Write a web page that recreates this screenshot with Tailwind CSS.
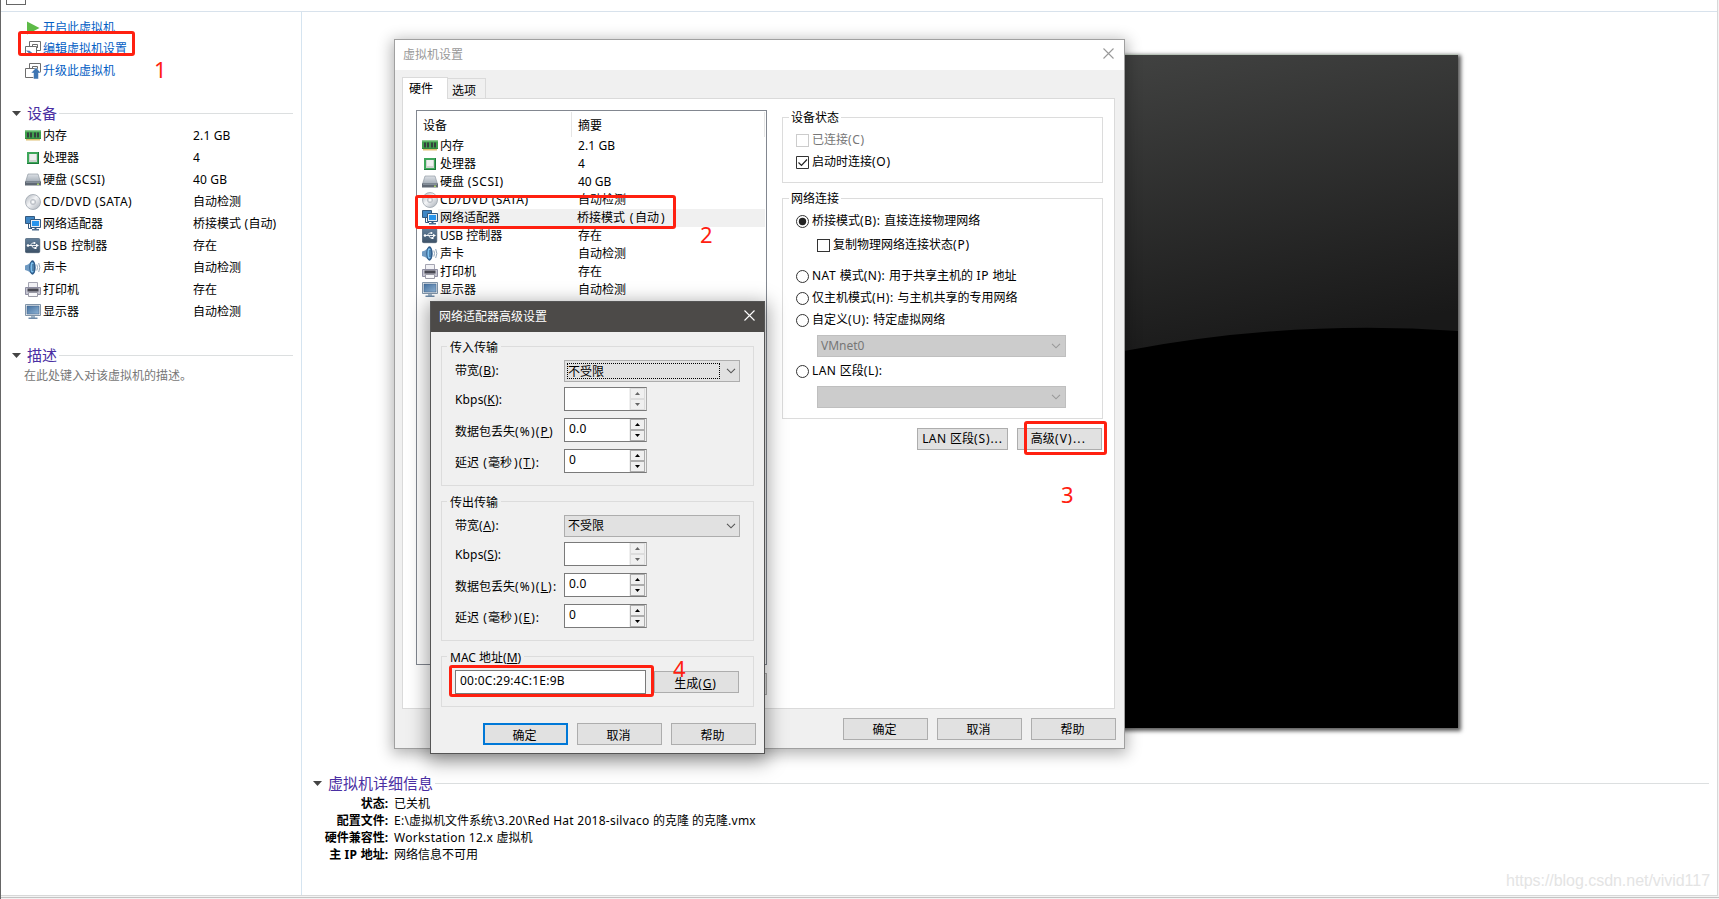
<!DOCTYPE html>
<html lang="zh-CN">
<head>
<meta charset="utf-8">
<title>虚拟机设置</title>
<script src="https://cdn.jsdelivr.net/npm/@tailwindcss/browser@4"></script>
</head>
<body class="relative h-[899px] w-[1719px] overflow-hidden bg-white font-['Noto_Sans','Noto_Sans_CJK_SC',sans-serif] text-[12px] leading-[18px] text-black">

<svg width="0" height="0" class="absolute">
  <defs>
    <linearGradient id="gdisk" x1="0" y1="0" x2="0" y2="1"><stop offset="0" stop-color="#dde1e6"/><stop offset="1" stop-color="#a3acb6"/></linearGradient>
    <linearGradient id="gscr" x1="0" y1="0" x2="1" y2="1"><stop offset="0" stop-color="#44709f"/><stop offset="1" stop-color="#8fb3d4"/></linearGradient>
    <linearGradient id="gcd" x1="0" y1="0" x2="1" y2="1"><stop offset="0" stop-color="#a9b0b8"/><stop offset=".45" stop-color="#f4f5f7"/><stop offset="1" stop-color="#a4abb4"/></linearGradient>
    <linearGradient id="gusb" x1="0" y1="0" x2="0" y2="1"><stop offset="0" stop-color="#64819c"/><stop offset="1" stop-color="#3c5167"/></linearGradient>
    <linearGradient id="gglass" x1="0" y1="0" x2=".28" y2="1"><stop offset="0" stop-color="#444544"/><stop offset="1" stop-color="#191919"/></linearGradient>
    <symbol id="mem" viewBox="0 0 16 16"><path d="M0 2.500h16V11H0z" fill="#3fa04c"/><path d="M0 2.500h16v1H0z" fill="#7cc981"/><path d="M2 4.500h2v5H2zM5 4.500h2v5H5zM9 4.500h2v5H9zM12 4.500h2v5h-2z" fill="#33413d"/><path d="M0 10h16v1H0z" fill="#2f8a3d"/><path d="M1 11h14v1.500H1z" fill="#dcbf72"/></symbol>
    <symbol id="cpu" viewBox="0 0 16 16"><path d="M2 2h12v12H2z" fill="#1c7a3a"/><path d="M2 2h11v11H2z" fill="#3ea75a"/><path d="M4 4h8v8H4z" fill="#cfd3d0"/><path d="M5 4h6v6H5z" fill="#eef0ef"/></symbol>
    <symbol id="disk" viewBox="0 0 16 16"><path d="M3 2h10l2.500 8H.5z" fill="url(#gdisk)" stroke="#858e99" stroke-width=".6"/><path d="M0 9.500h16v4H0z" fill="#5f6873"/><path d="M1 10h14v1H1z" fill="#848e99"/><path d="M12 11.500h2v1.500h-2z" fill="#a9d06a"/></symbol>
    <symbol id="cd" viewBox="0 0 16 16"><circle cx="8" cy="8" r="7.500" fill="url(#gcd)" stroke="#9da4ad" stroke-width=".8"/><circle cx="8" cy="8" r="2.600" fill="#d7dade" stroke="#b3b8bf" stroke-width=".8"/><circle cx="8" cy="8" r="1.100" fill="#fff"/></symbol>
    <symbol id="net" viewBox="0 0 16 16"><path d="M.5.500h9v7h-9z" fill="#3f86c4" stroke="#34597f"/><path d="M3.500 8v4.500H7" fill="none" stroke="#34597f"/><path d="M5.500 3.500h10v8h-10z" fill="#e8edf2" stroke="#34597f"/><path d="M7 5h7v5H7z" fill="#2794ec"/><path d="M9.500 12h2v1.500h-2z" fill="#34597f"/><path d="M7 13h7v1.500H7z" fill="#4b6a8d"/></symbol>
    <symbol id="usb" viewBox="0 0 16 16"><rect x=".3" y=".3" width="14.500" height="14.400" rx="1.500" fill="url(#gusb)" stroke="#3c5167" stroke-width=".6"/><path d="M3 7.500h9M5 7.500l2.500-2.500H9M6.500 7.500l2 2.500H10" fill="none" stroke="#fff" stroke-width=".9"/><circle cx="3" cy="7.500" r="1.300" fill="#fff"/><path d="m11 5.700 3 1.800-3 1.800z" fill="#fff"/><circle cx="9.500" cy="5" r="1" fill="#fff"/><path d="M9.500 9h2v2h-2z" fill="#fff"/></symbol>
    <symbol id="snd" viewBox="0 0 16 16"><path d="M0 5.500 3 4.500 7.500.500v14L3 11 0 10z" fill="#6f9ac2"/><ellipse cx="7.500" cy="7.500" rx="3.200" ry="7.200" fill="#2f5d8c"/><ellipse cx="7.200" cy="7.500" rx="1.800" ry="5.200" fill="#7cc0ee"/><path d="M8 4v7" stroke="#24496f"/><path d="M11.800 4.500q1.500 3 0 6M13.700 3q2.300 4.500 0 9" fill="none" stroke="#8fa4b8"/></symbol>
    <symbol id="prn" viewBox="0 0 16 16"><path d="M3.500.500h9v6h-9z" fill="#f1f1f5" stroke="#a5a5b2"/><path d="M.5 5.500h15v7H.5z" fill="#c4c4d0" stroke="#8e8ea2"/><path d="M2.500 6.500h11v3h-11z" fill="#484852"/><path d="M3.500 10.500h9v4h-9z" fill="#f7f7fa" stroke="#9a9aa6"/></symbol>
    <symbol id="dsp" viewBox="0 0 16 16"><path d="M.5.500h15v11H.5z" fill="#dfe6ec" stroke="#8194a8"/><path d="M2 2h12v8H2z" fill="url(#gscr)" stroke="#416288" stroke-width=".5"/><path d="M6 12h4v2H6z" fill="#9fb3c6"/><path d="M3.500 13.500h9V15h-9z" fill="#6d8aa8"/></symbol>
    <symbol id="vm" viewBox="0 0 16 16"><path d="M4.500 5V.500h11v9H12M.5 5.500h11v9H.5z" fill="none" stroke="#6d6d6d"/><path d="M7.500 5V3.500h5V7" fill="none" stroke="#6d6d6d"/></symbol>
    <symbol id="chev" viewBox="0 0 10 6"><path d="m1 .8 4 4 4-4" fill="none" stroke="currentColor" stroke-width="1.100"/></symbol>
    <symbol id="x" viewBox="0 0 11 11"><path d="m.5.500 10 10M10.500.500l-10 10" stroke="currentColor" stroke-width="1.100"/></symbol>
    <symbol id="up" viewBox="0 0 5 3"><path d="M0 3 2.500 0 5 3z" fill="currentColor"/></symbol>
    <symbol id="dn" viewBox="0 0 5 3"><path d="M0 0 2.500 3 5 0z" fill="currentColor"/></symbol>
    <symbol id="tri" viewBox="0 0 9 5"><path d="M0 0h9L4.500 5z" fill="#444"/></symbol>
  </defs>
</svg>

<div class="flex h-[899px] w-full flex-col border-l border-[#666] bg-[#f3f3f3]">
  <div class="flex h-[896px] w-[1717px] shrink-0 flex-col border-r border-b border-[#d8d8d8] bg-white">
  <header class="flex h-3 shrink-0 items-start border-b border-[#d8e2ec] pl-[5px]"><div class="h-[5px] w-5 border border-t-0 border-[#666]"></div></header>
  <div class="flex flex-1">

    <aside class="w-[301px] shrink-0 border-r border-[#d5e4f0] pt-[5px]">
      <nav class="flex flex-col pl-6 text-[#0560c4]">
        <a class="flex h-[21px] items-center gap-0.5"><svg class="size-4"><path d="M2 1.500 14.500 8 2 14.500z" fill="#5dba47"/></svg><span>开启此虚拟机</span></a>
        <a class="flex h-[22px] items-center gap-0.5"><svg class="size-4" viewBox="0 0 16 16"><use href="#vm"/><path d="m1 9.500 3.500.2L8 12.500h7v2.500H7z" fill="#4a78ae"/></svg><span>编辑虚拟机设置</span></a>
        <a class="flex h-[21px] items-center gap-0.5"><svg class="size-4" viewBox="0 0 16 16"><use href="#vm"/><path d="M11 4.500 16 10h-2.500v6h-5v-6H6z" fill="#3f76b3" stroke="#fff" stroke-width=".5"/></svg><span>升级此虚拟机</span></a>
      </nav>

      <h2 class="mt-5 flex h-6 items-center pl-[11px] pr-2 text-[15px] text-[#4a2fa3]"><svg class="mr-1.5 h-[5px] w-[9px]"><use href="#tri"/></svg>设备<i class="ml-0.5 h-px flex-1 bg-[#dcdfe0]"></i></h2>
      <ul class="flex flex-col pl-6">
        <li class="flex h-[22px] items-center gap-0.5"><svg class="size-4"><use href="#mem"/></svg><span class="w-[148px]">内存</span><span class="tracking-[.15px]">2.1 GB</span></li>
        <li class="flex h-[22px] items-center gap-0.5"><svg class="size-4"><use href="#cpu"/></svg><span class="w-[148px]">处理器</span><span>4</span></li>
        <li class="flex h-[22px] items-center gap-0.5"><svg class="size-4"><use href="#disk"/></svg><span class="w-[148px]">硬盘<span class="tracking-[.45px]"> (SCSI)</span></span><span class="tracking-[.15px]">40 GB</span></li>
        <li class="flex h-[22px] items-center gap-0.5"><svg class="size-4"><use href="#cd"/></svg><span class="w-[148px] tracking-[.5px]">CD/DVD (SATA)</span><span>自动检测</span></li>
        <li class="flex h-[22px] items-center gap-0.5"><svg class="size-4"><use href="#net"/></svg><span class="w-[148px]">网络适配器</span><span>桥接模式<span class="tracking-[.4px]"> (</span>自动)</span></li>
        <li class="flex h-[22px] items-center gap-0.5"><svg class="size-4"><use href="#usb"/></svg><span class="w-[148px]"><span class="tracking-[.5px]">USB </span>控制器</span><span>存在</span></li>
        <li class="flex h-[22px] items-center gap-0.5"><svg class="size-4"><use href="#snd"/></svg><span class="w-[148px]">声卡</span><span>自动检测</span></li>
        <li class="flex h-[22px] items-center gap-0.5"><svg class="size-4"><use href="#prn"/></svg><span class="w-[148px]">打印机</span><span>存在</span></li>
        <li class="flex h-[22px] items-center gap-0.5"><svg class="size-4"><use href="#dsp"/></svg><span class="w-[148px]">显示器</span><span>自动检测</span></li>
      </ul>
      <h2 class="mt-5 flex h-6 items-center pl-[11px] pr-2 text-[15px] text-[#4a2fa3]"><svg class="mr-1.5 h-[5px] w-[9px]"><use href="#tri"/></svg>描述<i class="ml-0.5 h-px flex-1 bg-[#dcdfe0]"></i></h2>
      <p class="pl-[23px] text-[#777]">在此处键入对该虚拟机的描述。</p>
    </aside>

    <main class="flex flex-1 flex-col">
      <div class="mt-[42px] ml-[700px] h-[674px] w-[456px] border-t border-[#b9c4b9] bg-black shadow-[2px_2px_4px_1px_rgba(0,0,0,.65)]">
        <svg class="h-[673px] w-[456px]" viewBox="0 0 456 673"><path d="M0 0h456v276Q290 264 122 296L0 320z" fill="url(#gglass)"/></svg>
      </div>
      <h2 class="mt-[43px] flex h-6 items-center pl-[11px] pr-2 text-[15px] text-[#4a2fa3]"><svg class="mr-1.5 h-[5px] w-[9px]"><use href="#tri"/></svg>虚拟机详细信息<i class="ml-0.5 h-px flex-1 bg-[#dcdfe0]"></i></h2>
      <dl class="grid grid-cols-[86px_1fr] gap-x-1.5 leading-[17px]">
        <dt class="text-right font-bold">状态:</dt><dd>已关机</dd>
        <dt class="text-right font-bold">配置文件:</dt><dd><span class="tracking-[.25px]">E:\</span>虚拟机文件系统<span class="tracking-[.26px]">\3.20\Red Hat 2018-silvaco </span>的克隆 的克隆<span class="tracking-[.26px]">.vmx</span></dd>
        <dt class="text-right font-bold">硬件兼容性:</dt><dd><span class="tracking-[.27px]">Workstation 12.x </span>虚拟机</dd>
        <dt class="text-right font-bold">主<span class="tracking-[.25px]"> IP </span>地址:</dt><dd>网络信息不可用</dd>
      </dl>
    </main>
  </div>
  </div>
  <div class="mt-px h-px shrink-0 bg-[#c4c4c4]"></div>
</div>

<div class="absolute right-[9px] bottom-[8px] font-['Liberation_Sans',sans-serif] text-[16px] leading-5 tracking-[-0.04px] text-[#e4e4e4]">https://blog.csdn.net/vivid117</div>

<!-- virtual machine settings window -->
<section class="absolute left-[394px] top-[39px] flex h-[710px] w-[731px] flex-col border border-[#a0a0a0] bg-[#f0f0f0] shadow-[0_3px_14px_2px_rgba(0,0,0,.3)]">
  <div class="flex h-[30px] shrink-0 items-center justify-between bg-white pl-2 pr-2.5 text-[#999]"><span>虚拟机设置</span><svg class="-mt-1 size-[11px]"><use href="#x"/></svg></div>
  <div class="flex h-[28px] shrink-0 items-end pl-[7px]">
    <div class="relative z-10 -mb-px h-[22px] w-[46px] border border-b-0 border-[#dadada] bg-white pl-1.5 leading-[22px]">硬件</div>
    <div class="h-5 w-[38px] border border-b-0 border-l-0 border-[#dadada] pl-1 leading-[23px]">选项</div>
  </div>
  <div class="ml-[7px] flex h-[611px] w-[713px] shrink-0 border border-[#dadada] bg-white">
    <div class="ml-[13px] mt-[11px] flex w-[351px] shrink-0 flex-col">
      <div class="h-[555px] shrink-0 border border-[#828790]">
        <div class="mt-px mr-px flex h-[25px] border-r border-[#e5e5e5] pl-1.5 leading-[27px]"><span class="w-[149px] border-r border-[#e5e5e5]">设备</span><span class="pl-1.5">摘要</span></div>
        <ul class="pl-[5px] pr-px">
          <li class="flex h-[18px] items-center gap-0.5"><svg class="size-4"><use href="#mem"/></svg><span class="w-[136px]">内存</span><span class="tracking-[.1px]">2.1 GB</span></li>
          <li class="flex h-[18px] items-center gap-0.5"><svg class="size-4"><use href="#cpu"/></svg><span class="w-[136px]">处理器</span><span>4</span></li>
          <li class="flex h-[18px] items-center gap-0.5"><svg class="size-4"><use href="#disk"/></svg><span class="w-[136px]">硬盘<span class="tracking-[.65px]"> (SCSI)</span></span><span>40 GB</span></li>
          <li class="flex h-[18px] items-center gap-0.5"><svg class="size-4"><use href="#cd"/></svg><span class="w-[136px] tracking-[.45px]">CD/DVD (SATA)</span><span>自动检测</span></li>
          <li class="flex h-[18px] items-center"><svg class="size-4"><use href="#net"/></svg><span class="w-[139px] bg-[#f0f0f0] pl-0.5">网络适配器</span><span class="flex-1 bg-[#f0f0f0]">桥接模式<span class="tracking-[1.6px]"> (</span>自动<span class="pl-0.5">)</span></span></li>
          <li class="flex h-[18px] items-center gap-0.5"><svg class="size-4"><use href="#usb"/></svg><span class="w-[136px]">USB 控制器</span><span>存在</span></li>
          <li class="flex h-[18px] items-center gap-0.5"><svg class="size-4"><use href="#snd"/></svg><span class="w-[136px]">声卡</span><span>自动检测</span></li>
          <li class="flex h-[18px] items-center gap-0.5"><svg class="size-4"><use href="#prn"/></svg><span class="w-[136px]">打印机</span><span>存在</span></li>
          <li class="flex h-[18px] items-center gap-0.5"><svg class="size-4"><use href="#dsp"/></svg><span class="w-[136px]">显示器</span><span>自动检测</span></li>
        </ul>
      </div>
      <div class="mt-2 h-[22px] w-[85px] self-end border border-[#adadad] bg-[#e1e1e1]"></div>
    </div>

    <div class="ml-[15px] mt-[18px] flex w-[321px] flex-col">
      <div class="flex h-[66px] shrink-0 flex-col border border-[#dcdcdc] pl-[13px]">
        <span class="-mt-[9px] -ml-[7px] self-start bg-white px-0.5">设备状态</span>
        <label class="mt-0.5 flex h-[22px] items-center gap-[3px] text-[#777]"><i class="size-[13px] border border-[#ccc]"></i><span>已连接<span class="tracking-[.7px]">(C)</span></span></label>
        <label class="flex h-[22px] items-center gap-[3px]"><svg class="size-[13px]"><path d="M.5.500h12v12H.5z" fill="#fff" stroke="#333"/><path d="m2.500 6.500 3 3 5.500-6" fill="none" stroke="#222" stroke-width="1.200"/></svg><span>启动时连接<span class="tracking-[.7px]">(O)</span></span></label>
      </div>
      <div class="mt-[15px] flex h-[221px] shrink-0 flex-col border border-[#dcdcdc] pl-[13px]">
        <span class="-mt-[9px] -ml-[7px] self-start bg-white px-0.5">网络连接</span>
        <label class="mt-[2px] flex h-[22px] items-center gap-[3px]"><svg class="size-[13px]"><circle cx="6.500" cy="6.500" r="6" fill="#fff" stroke="#333"/><circle cx="6.500" cy="6.500" r="3.700" fill="#222"/></svg><span>桥接模式<span class="tracking-[.6px]">(B): </span>直接连接物理网络</span></label>
        <label class="ml-[21px] mt-[2px] flex h-[22px] items-center gap-[3px]"><i class="size-[13px] border border-[#333]"></i><span>复制物理网络连接状态<span class="tracking-[.8px]">(P)</span></span></label>
        <label class="mt-[9px] flex h-[22px] items-center gap-[3px]"><i class="size-[13px] rounded-full border border-[#333]"></i><span><span class="tracking-[.5px]">NAT </span>模式<span class="tracking-[.5px]">(N): </span>用于共享主机的<span class="tracking-[.5px]"> IP </span>地址</span></label>
        <label class="flex h-[22px] items-center gap-[3px]"><i class="size-[13px] rounded-full border border-[#333]"></i><span>仅主机模式<span class="tracking-[.6px]">(H): </span>与主机共享的专用网络</span></label>
        <label class="flex h-[22px] items-center gap-[3px]"><i class="size-[13px] rounded-full border border-[#333]"></i><span>自定义<span class="tracking-[.6px]">(U): </span>特定虚拟网络</span></label>
        <div class="ml-[21px] mt-1 flex h-[22px] w-[249px] items-center justify-between border border-[#bfbfbf] bg-[#ccc] pl-[3px] pr-1 text-[#777]">VMnet0<svg class="h-1.5 w-2.5 text-[#999]"><use href="#chev"/></svg></div>
        <label class="mt-[3px] flex h-[22px] items-center gap-[3px]"><i class="size-[13px] rounded-full border border-[#333]"></i><span><span class="tracking-[.4px]">LAN </span>区段<span class="tracking-[.5px]">(L):</span></span></label>
        <div class="ml-[21px] mt-1 flex h-[22px] w-[249px] items-center justify-end border border-[#bfbfbf] bg-[#ccc] pr-1"><svg class="h-1.5 w-2.5 text-[#999]"><use href="#chev"/></svg></div>
      </div>
      <div class="mt-[9px] flex justify-end gap-[9px] pr-px">
        <button class="h-[22px] w-[91px] whitespace-nowrap border border-[#adadad] bg-[#e1e1e1]"><span class="tracking-[.4px]">LAN </span>区段<span class="tracking-[.9px]">(S)...</span></button>
        <button class="h-[22px] w-[85px] border border-[#adadad] bg-[#e1e1e1] pr-0.5">高级<span class="tracking-[1.200px]">(V)...</span></button>
      </div>
    </div>
  </div>
  <div class="mt-[9px] flex justify-end gap-[9px] pr-2">
    <button class="h-[22px] w-[85px] border border-[#adadad] bg-[#e1e1e1] pr-0.5 leading-[22px]">确定</button>
    <button class="h-[22px] w-[85px] border border-[#adadad] bg-[#e1e1e1] pr-0.5 leading-[22px]">取消</button>
    <button class="h-[22px] w-[85px] border border-[#adadad] bg-[#e1e1e1] pr-0.5 leading-[22px]">帮助</button>
  </div>
</section>

<!-- advanced network adapter window -->
<section class="absolute left-[430px] top-[301px] flex h-[453px] w-[335px] flex-col border border-[#555] bg-[#f0f0f0] shadow-[0_5px_18px_3px_rgba(0,0,0,.36)]">
  <div class="flex h-[30px] shrink-0 items-center justify-between bg-[#4c4a48] pl-2 pr-[9px] text-white"><span>网络适配器高级设置</span><svg class="-mt-1 size-[11px]"><use href="#x"/></svg></div>
  <div class="ml-2.5 mt-3.5 flex h-[140px] w-[313px] shrink-0 flex-col border border-[#dcdcdc] pl-[13px]">
    <span class="-mt-[9px] -ml-2 h-[18px] self-start bg-[#f0f0f0] px-[3px] leading-[19px]">传入传输</span>
    <div class="mt-1 flex h-[22px]"><span class="w-[109px] leading-[22px]">带宽<span class="tracking-[.5px]">(<u>B</u>):</span></span><div class="flex h-[22px] w-[176px] items-center justify-between border border-[#adadad] bg-[#e1e1e1] pl-0.5 pr-[3px]"><span class="h-4 w-[153px] border border-dotted border-black leading-[16px]">不受限</span><svg class="h-1.5 w-2.5 text-[#555]"><use href="#chev"/></svg></div></div>
    <div class="mt-[5px] flex h-6"><span class="w-[109px] leading-[25px] tracking-[.15px]">Kbps(<u>K</u>):</span><div class="flex h-6 w-[83px] border border-[#7a7a7a] border-r-[#adadad] bg-white"><span class="flex-1 pl-1"></span><span class="flex w-[17px] flex-col bg-[#f0f0f0] px-px text-[#666]"><i class="flex h-[11px] items-center justify-center border border-[#ddd]"><svg class="h-[3px] w-[5px]"><use href="#up"/></svg></i><i class="flex h-[11px] items-center justify-center border border-[#ddd]"><svg class="h-[3px] w-[5px]"><use href="#dn"/></svg></i></span></div></div>
    <div class="mt-[7px] flex h-6"><span class="w-[109px] whitespace-nowrap leading-[27px]">数据包丢失<span class="tracking-[1.200px]">(%)(<u>P</u>)</span></span><div class="flex h-6 w-[83px] border border-[#7a7a7a] border-r-[#adadad] bg-white"><span class="flex-1 pl-1 leading-5 tracking-[.2px]">0.0</span><span class="flex w-[17px] flex-col bg-[#f0f0f0] px-px"><i class="flex h-[11px] items-center justify-center border border-[#adadad]"><svg class="h-[3px] w-[5px]"><use href="#up"/></svg></i><i class="flex h-[11px] items-center justify-center border border-[#adadad]"><svg class="h-[3px] w-[5px]"><use href="#dn"/></svg></i></span></div></div>
    <div class="mt-[7px] flex h-6"><span class="w-[109px] whitespace-nowrap leading-[27px]">延迟<span class="tracking-[1.100px]"> (</span>毫秒<span class="pl-0.5 tracking-[1.100px]">)(<u>T</u>):</span></span><div class="flex h-6 w-[83px] border border-[#7a7a7a] border-r-[#adadad] bg-white"><span class="flex-1 pl-1 leading-5">0</span><span class="flex w-[17px] flex-col bg-[#f0f0f0] px-px"><i class="flex h-[11px] items-center justify-center border border-[#adadad]"><svg class="h-[3px] w-[5px]"><use href="#up"/></svg></i><i class="flex h-[11px] items-center justify-center border border-[#adadad]"><svg class="h-[3px] w-[5px]"><use href="#dn"/></svg></i></span></div></div>
  </div>
  <div class="ml-2.5 mt-[15px] flex h-[140px] w-[313px] shrink-0 flex-col border border-[#dcdcdc] pl-[13px]">
    <span class="-mt-[9px] -ml-2 h-[18px] self-start bg-[#f0f0f0] px-[3px] leading-[19px]">传出传输</span>
    <div class="mt-1 flex h-[22px]"><span class="w-[109px] leading-[22px]">带宽<span class="tracking-[.5px]">(<u>A</u>):</span></span><div class="flex h-[22px] w-[176px] items-center justify-between border border-[#adadad] bg-[#e1e1e1] pl-[3px] pr-[3px]"><span class="leading-[20px]">不受限</span><svg class="h-1.5 w-2.5 text-[#555]"><use href="#chev"/></svg></div></div>
    <div class="mt-[5px] flex h-6"><span class="w-[109px] leading-[25px] tracking-[.15px]">Kbps(<u>S</u>):</span><div class="flex h-6 w-[83px] border border-[#7a7a7a] border-r-[#adadad] bg-white"><span class="flex-1 pl-1"></span><span class="flex w-[17px] flex-col bg-[#f0f0f0] px-px text-[#666]"><i class="flex h-[11px] items-center justify-center border border-[#ddd]"><svg class="h-[3px] w-[5px]"><use href="#up"/></svg></i><i class="flex h-[11px] items-center justify-center border border-[#ddd]"><svg class="h-[3px] w-[5px]"><use href="#dn"/></svg></i></span></div></div>
    <div class="mt-[7px] flex h-6"><span class="w-[109px] whitespace-nowrap leading-[27px]">数据包丢失<span class="tracking-[1.200px]">(%)(<u>L</u>):</span></span><div class="flex h-6 w-[83px] border border-[#7a7a7a] border-r-[#adadad] bg-white"><span class="flex-1 pl-1 leading-5 tracking-[.2px]">0.0</span><span class="flex w-[17px] flex-col bg-[#f0f0f0] px-px"><i class="flex h-[11px] items-center justify-center border border-[#adadad]"><svg class="h-[3px] w-[5px]"><use href="#up"/></svg></i><i class="flex h-[11px] items-center justify-center border border-[#adadad]"><svg class="h-[3px] w-[5px]"><use href="#dn"/></svg></i></span></div></div>
    <div class="mt-[7px] flex h-6"><span class="w-[109px] whitespace-nowrap leading-[27px]">延迟<span class="tracking-[1.100px]"> (</span>毫秒<span class="pl-0.5 tracking-[1.100px]">)(<u>E</u>):</span></span><div class="flex h-6 w-[83px] border border-[#7a7a7a] border-r-[#adadad] bg-white"><span class="flex-1 pl-1 leading-5">0</span><span class="flex w-[17px] flex-col bg-[#f0f0f0] px-px"><i class="flex h-[11px] items-center justify-center border border-[#adadad]"><svg class="h-[3px] w-[5px]"><use href="#up"/></svg></i><i class="flex h-[11px] items-center justify-center border border-[#adadad]"><svg class="h-[3px] w-[5px]"><use href="#dn"/></svg></i></span></div></div>
  </div>
  <div class="ml-2.5 mt-[15px] flex h-[51px] w-[313px] shrink-0 flex-col border border-[#dcdcdc] pl-[13px]">
    <span class="-mt-[9px] -ml-2 h-[18px] self-start bg-[#f0f0f0] px-[3px] leading-[19px]">MAC 地址(<u>M</u>)</span>
    <div class="mt-1 flex items-start gap-2"><div class="h-6 w-[191px] border border-[#7a7a7a] bg-white pl-1 leading-5 tracking-[.25px]">00:0C:29:4C:1E:9B</div><button class="mt-px h-[22px] w-[85px] border border-[#adadad] bg-[#e1e1e1] pr-0.5 leading-[23px]">生成<span class="tracking-[.8px]">(<u>G</u>)</span></button></div>
  </div>
  <div class="mt-4 flex justify-end gap-[9px] pr-2">
    <button class="h-[22px] w-[85px] border-2 border-[#0078d7] bg-[#e1e1e1] pr-0.5 leading-[21px]">确定</button>
    <button class="h-[22px] w-[85px] border border-[#adadad] bg-[#e1e1e1] pr-0.5 leading-[23px]">取消</button>
    <button class="h-[22px] w-[85px] border border-[#adadad] bg-[#e1e1e1] pr-0.5 leading-[23px]">帮助</button>
  </div>
</section>

<!-- step markers -->
<div class="absolute left-[18px] top-[31px] h-[25px] w-[117px] rounded-[3px] border-3 border-[#ff2010]"></div>
<div class="absolute left-[415px] top-[195px] h-[34px] w-[261px] rounded-[3px] border-3 border-[#ff2010]"></div>
<div class="absolute left-[1024px] top-[421px] h-[34px] w-[83px] rounded-[3px] border-3 border-[#ff2010]"></div>
<div class="absolute left-[449px] top-[665px] h-[32px] w-[205px] rounded-[3px] border-3 border-[#ff2010]"></div>
<span class="absolute left-[154px] top-[57px] text-[22px] leading-6 text-[#ff2010]">1</span>
<span class="absolute left-[700px] top-[222px] text-[22px] leading-6 text-[#ff2010]">2</span>
<span class="absolute left-[1061px] top-[482px] text-[22px] leading-6 text-[#ff2010]">3</span>
<span class="absolute left-[673px] top-[656px] text-[22px] leading-6 text-[#ff2010]">4</span>
</body>
</html>
